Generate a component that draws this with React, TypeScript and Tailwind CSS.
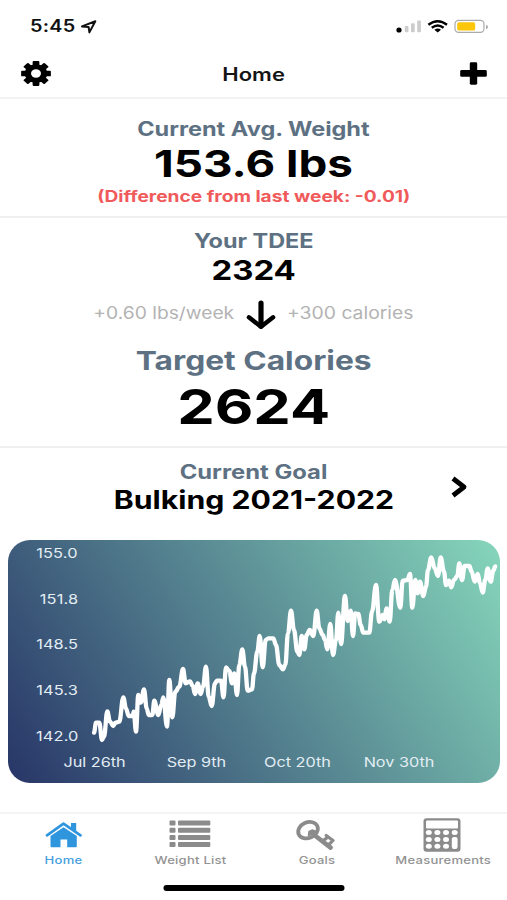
import type { ReactNode } from "react";

type Point = [number, number];

// Daily weight readings, in card-space pixels.
const readings: Point[] = [
  [94, 732.7], [96, 722.7], [99.3, 722.7], [102, 740], [104, 736.7], [107.3, 711.3], [110, 721.7], [113.3, 726],
  [115.3, 722.7], [119.3, 721.7], [123.3, 697.3], [126, 708.3], [128.7, 716], [132.7, 716], [133.7, 711.7], [136, 731.7],
  [138.3, 695], [140.7, 702.7], [144, 689.3], [146.7, 708.3], [148.7, 715], [152.3, 715], [154.3, 700.7], [158.3, 715],
  [161.3, 705], [163.3, 697.3], [167, 726.7], [169.3, 680], [172.3, 717.3], [175.3, 691.7], [179.3, 686.7], [183, 669],
  [185.7, 683.3], [190, 681.3], [192.7, 686], [195, 694], [197.7, 683.3], [200.7, 694], [203, 686.7], [206, 666.7],
  [208.7, 696.7], [211.7, 706], [215, 683.3], [217, 680.7], [221, 680.7], [223.5, 697.3], [226, 667.3], [229.3, 671],
  [232, 683.3], [234.3, 673.3], [237, 695], [239.3, 665], [242.3, 649.3], [245, 666.7], [247.7, 690.7], [252, 689.3],
  [254, 673.3], [257.3, 651.7], [259.7, 636], [262.7, 667.3], [265.7, 640], [268.3, 638.3], [273.3, 638.3], [276, 645],
  [279.3, 665], [283, 669.3], [285.3, 665], [288, 633.3], [291, 610.7], [294, 630], [297.3, 651.7], [299.3, 655],
  [301.7, 636], [304.3, 649.3], [306.7, 635], [309.7, 630], [313.3, 636], [316.7, 610.7], [319.3, 628.3], [322.7, 635],
  [325, 640], [327.3, 649.3], [330.3, 624], [333, 655], [336, 640], [338.3, 612.7], [341, 644], [345, 596],
  [347.7, 621], [350.7, 610.7], [353, 636], [355.2, 613.5], [358.3, 614], [360.7, 625], [363.3, 632.7], [369.3, 632.7],
  [372, 611.7], [376, 585], [379.3, 621.7], [382.7, 615], [384.3, 619.3], [386.7, 608.3], [389.7, 621.7], [392.3, 590],
  [395, 580], [400.3, 607.7], [402.7, 580.7], [407.3, 580], [410, 574], [412.3, 607.7], [415.3, 580], [417.7, 593.3],
  [420, 581.7], [423.3, 596], [426, 586.7], [428, 570], [431.3, 557.3], [434.7, 568.3], [438, 576], [440.7, 557.3],
  [444, 571.7], [446, 585], [449, 580.7], [451.3, 587.3], [454, 580], [457.3, 576], [459.3, 563.3], [462, 580],
  [464.7, 566], [469.3, 566], [471.7, 571.7], [474.7, 581.7], [477.7, 574], [480, 583.3], [482.7, 592.7], [485.3, 580],
  [487.7, 568.3], [490.7, 581.7], [493.3, 570.7], [495.3, 566.5],
];

const linePath = readings.reduce((d, [x, y], i) => {
  if (i === 0) return `M${x} ${y}`;
  const [px, py] = readings[i - 1];
  const dx = (x - px) * 0.4;
  return `${d}C${px + dx} ${py} ${x - dx} ${y} ${x} ${y}`;
}, "");

function Text({ className, children }: { className: string; children: ReactNode }) {
  return <div className={`flex items-center justify-center whitespace-nowrap leading-none ${className}`}>{children}</div>;
}

function Wide({ className = "scale-x-[1.22]", children }: { className?: string; children: ReactNode }) {
  return <span className={`inline-block ${className}`}>{children}</span>;
}

function StatusBar() {
  return (
    <div className="flex h-[50px] items-center pt-[3px] pl-[30px] pr-[19px]">
      <span className="origin-left scale-x-[1.18] text-[16.8px] font-semibold leading-none tracking-[0.2px] text-[#111]">5:45</span>
      <svg className="ml-[12px]" width="18" height="14" viewBox="0 0 18 14">
        <path d="M2 6.4 15.3 1.2 9.4 12.4 8.6 6.9Z" fill="none" stroke="#111" strokeWidth="2" strokeLinejoin="round" />
      </svg>
      <div className="flex-1" />
      <svg className="-mt-px" width="92" height="16" viewBox="0 0 92 16">
        <circle cx="6" cy="12" r="2.6" fill="#000" />
        <rect x="11.8" y="8" width="3.7" height="6.2" rx="1" fill="#ccc" />
        <rect x="18" y="5.3" width="3.7" height="8.9" rx="1" fill="#ccc" />
        <rect x="24.2" y="2.4" width="3.7" height="11.8" rx="1" fill="#ccc" />
        <g fill="none" stroke="#000" strokeWidth="2.4">
          <path d="M35.4 6.8Q44.7-0.4 54 6.8" />
          <path d="M38.8 9.8Q44.7 5 50.6 9.8" />
        </g>
        <path d="M41.4 11.8Q44.7 9.4 48 11.8L44.7 14.4Z" />
        <rect x="62" y="2.4" width="29" height="12" rx="3.6" fill="none" stroke="#aaa" strokeWidth="1.2" />
        <rect x="64.2" y="4.3" width="18" height="8.2" rx="1.6" fill="#fcc70b" />
      </svg>
      <span className="ml-px h-[4px] w-[2px] rounded-r-full bg-[#aaa]" />
    </div>
  );
}

function GearIcon() {
  return (
    <svg width="30" height="25" viewBox="-12 -12 24 24" preserveAspectRatio="none">
      {[0, 45, 90, 135].map((a) => (
        <rect key={a} x="-2.7" y="-11.9" width="5.4" height="23.8" rx="0.8" transform={`rotate(${a})`} />
      ))}
      <circle r="9" />
      <circle r="4" fill="#fff" />
    </svg>
  );
}

function Header() {
  return (
    <div className="flex h-[49px] items-center justify-between border-b-2 border-[#f3f3f3] pr-[20px] pl-[21px]">
      <GearIcon />
      <span className="mt-[2px] mr-[3px] text-[18px] font-semibold leading-none text-[#151515]">
        <Wide>Home</Wide>
      </span>
      <svg className="-mt-px" width="27" height="23" viewBox="0 0 27 23">
        <rect x="0.2" y="8" width="26.6" height="6.8" rx="1.4" />
        <rect x="9.8" y="0.3" width="7.4" height="22.4" rx="1.4" />
      </svg>
    </div>
  );
}

function Chart() {
  return (
    <div className="mr-[7px] ml-[8px] h-[243px] overflow-hidden rounded-[22px] bg-[linear-gradient(57deg,#273567,#86d6bb)] text-[13.3px] text-[#e3edf3]">
      <div className="flex h-[211px]">
        <div className="-mt-[9px] flex w-[70px] flex-col items-end">
          {["155.0", "151.8", "148.5", "145.3", "142.0"].map((v) => (
            <span key={v} className="flex h-[45.6px] shrink-0 origin-right scale-x-[1.23] items-center leading-none tracking-[0.1px]">
              {v}
            </span>
          ))}
        </div>
        <svg width="422" height="211" viewBox="78 540 422 211">
          <path d={linePath} fill="none" stroke="#fff" strokeWidth="4.3" strokeLinecap="round" strokeLinejoin="round" />
        </svg>
      </div>
      <div className="flex h-[23px] pl-[36px] leading-none">
        {["Jul 26th", "Sep 9th", "Oct 20th", "Nov 30th"].map((v) => (
          <span key={v} className="flex w-[101.5px] items-center justify-center whitespace-nowrap">
            <Wide>{v}</Wide>
          </span>
        ))}
      </div>
    </div>
  );
}

function HomeIcon() {
  return (
    <svg className="ml-[2px]" width="38" height="26" viewBox="0 0 38 26" fill="#2f96de">
      <path d="M26 1h5.2v9.5L26 6.5Z" />
      <path d="M2 13.3 18.5 1.6 35.5 13.3" fill="none" stroke="#2f96de" strokeWidth="2.7" strokeLinecap="round" strokeLinejoin="round" />
      <path d="M5.5 14 18.5 5.2 31.8 14V24.2a1 1 0 0 1-1 1H22.2V17.6H15.5V25.2H6.5a1 1 0 0 1-1-1Z" />
    </svg>
  );
}

function ListIcon() {
  return (
    <svg className="-mt-[2px]" width="42" height="28" viewBox="0 0 42 28" fill="#8b8b8b">
      {[0.5, 7.7, 14.9, 22.1].map((y) => (
        <g key={y}>
          <rect x="0.5" y={y} width="6" height="5" rx="1" />
          <rect x="9" y={y} width="32.3" height="5" rx="1" />
        </g>
      ))}
    </svg>
  );
}

function KeyIcon() {
  return (
    <svg className="-ml-[3px]" width="40" height="32" viewBox="0 0 40 32" fill="none" stroke="#8b8b8b">
      <ellipse cx="13" cy="11.2" rx="10.2" ry="7.8" strokeWidth="3.8" transform="rotate(-24 13 11.2)" />
      <path d="M13.5 16.5 14 12.5 17.5 11 21 12.5Z" fill="#8b8b8b" strokeWidth="1.5" strokeLinejoin="round" />
      <path d="M18 15 35.6 28.6" strokeWidth="4.6" strokeLinecap="round" />
      <path d="M28.2 21.6 33 18M33.6 25.4 37.2 22.4" strokeWidth="3.2" />
      <path d="M31.2 16.4 38 21.6" strokeWidth="3.2" strokeLinecap="round" />
    </svg>
  );
}

function CalculatorIcon() {
  return (
    <svg className="-ml-[4px]" width="38" height="34" viewBox="0 0 38 34">
      <rect x="0.5" y="0.3" width="37" height="33.4" rx="3" fill="#8b8b8b" />
      <g fill="#fff">
        <rect x="3" y="2.6" width="32" height="7.8" rx="1" />
        {[14.6, 21.4, 28.3].map((y) =>
          [5.8, 14.4, 23, 31.7].map((x, i) =>
            i === 3 && y > 15 ? null : <ellipse key={`${x}-${y}`} cx={x} cy={y} rx="3" ry="2.5" />,
          ),
        )}
        <rect x="28.8" y="18.9" width="5.8" height="12" rx="2.2" />
      </g>
    </svg>
  );
}

const tabs = [
  { name: "Home", icon: <HomeIcon />, color: "text-[#45a0e0]" },
  { name: "Weight List", icon: <ListIcon />, color: "text-[#929292]" },
  { name: "Goals", icon: <KeyIcon />, color: "text-[#929292]" },
  { name: "Measurements", icon: <CalculatorIcon />, color: "text-[#929292]" },
];

function TabBar() {
  return (
    <div className="mt-[29px] border-t-2 border-[#f4f4f4]">
      <div className="flex h-[54px] pt-px">
        {tabs.map((t) => (
          <div key={t.name} className={`flex w-1/4 flex-col items-center ${t.color}`}>
            <div className="flex h-[40px] items-center">{t.icon}</div>
            <Text className="h-[12px] text-[10.7px] font-medium tracking-[0.2px]">
              <Wide>{t.name}</Wide>
            </Text>
          </div>
        ))}
      </div>
      <div className="mx-auto mt-[17px] h-[6px] w-[181px] translate-x-[0.5px] rounded-full bg-black" />
    </div>
  );
}

export default function App() {
  return (
    <div className="flex h-[900px] w-[507px] flex-col overflow-hidden bg-white font-['Inter',sans-serif] text-black">
      <StatusBar />
      <Header />
      <section className="h-[119px] border-b-2 border-[#f0f0f0] pt-[18px] font-bold">
        <Text className="h-[26px] text-[19.5px] text-[#5d7183]"><Wide className="scale-x-[1.205]">Current Avg. Weight</Wide></Text>
        <Text className="h-[42px] text-[37.5px]"><Wide>153.6 lbs</Wide></Text>
        <Text className="h-[24px] text-[15.5px] text-[#f05a5b]"><Wide className="scale-x-[1.235]">(Difference from last week: -0.01)</Wide></Text>
      </section>
      <section className="h-[230px] border-b-2 border-[#f0f0f0] pt-[11px]">
        <Text className="h-[26px] text-[19.5px] font-bold text-[#5d7183]"><Wide className="scale-x-[1.2]">Your TDEE</Wide></Text>
        <Text className="h-[31px] text-[27px] font-bold"><Wide>2324</Wide></Text>
        <div className="flex h-[55px] items-center justify-center text-[16.6px] text-[#b3b3b3]">
          <Text className="h-[20px] w-[140px]"><Wide className="scale-x-[1.16]">+0.60 lbs/week</Wide></Text>
          <svg className="mx-[12px] mt-[3px]" width="30" height="30" viewBox="0 0 30 30" fill="none" stroke="#000" strokeLinecap="round" strokeLinejoin="round">
            <path d="M15 3V26" strokeWidth="5.2" />
            <path d="M2.9 17.3 15 26.8 27.1 17.3" strokeWidth="4.4" />
          </svg>
          <Text className="h-[20px] w-[126px]"><Wide className="scale-x-[1.165]">+300 calories</Wide></Text>
        </div>
        <Text className="h-[40px] text-[26px] font-bold text-[#5d7183]"><Wide>Target Calories</Wide></Text>
        <Text className="h-[51px] text-[48px] font-bold"><Wide className="scale-x-[1.24]">2624</Wide></Text>
      </section>
      <section className="flex h-[92px] pt-[12px] font-bold">
        <div className="w-[56px]" />
        <div className="flex-1">
          <Text className="h-[26px] text-[19.5px] text-[#5d7183]"><Wide>Current Goal</Wide></Text>
          <Text className="h-[29px] text-[25px]"><Wide className="scale-x-[1.21]">Bulking 2021-2022</Wide></Text>
        </div>
        <svg className="mt-[16px] mr-[27px]" width="29" height="22" viewBox="0 0 29 22">
          <path d="M2 2.5 13 11 2 19.5" fill="none" stroke="#000" strokeWidth="4.8" strokeLinejoin="round" />
        </svg>
      </section>
      <Chart />
      <TabBar />
    </div>
  );
}
